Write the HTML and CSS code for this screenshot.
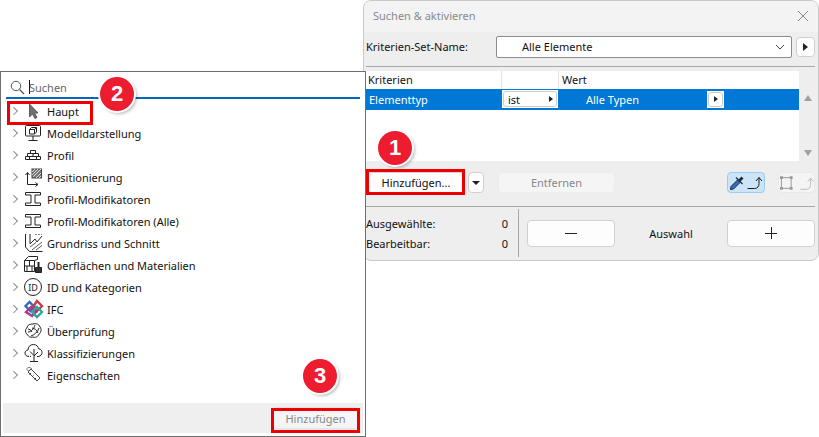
FILE: index.html
```html
<!DOCTYPE html>
<html lang="de">
<head>
<meta charset="utf-8">
<title>Suchen &amp; aktivieren</title>
<link rel="stylesheet" href="styles.css">
</head>
<body>
<section class="dialog">
  <header class="dialog-title">
    <span>Suchen &amp; aktivieren</span>
    <svg class="close" width="12" height="12" viewBox="0 0 12 12"><path d="M1 1l10 10M11 1L1 11" stroke="#8a8a8a" fill="none"/></svg>
  </header>
  <div class="dialog-body">
    <div class="set-row">
      <label class="set-label">Kriterien-Set-Name:</label>
      <div class="select">
        <span>Alle Elemente</span>
        <svg width="10" height="6" viewBox="0 0 10 6"><path d="M1 1l4 4 4-4" stroke="#444" fill="none"/></svg>
      </div>
      <button class="btn arrow-btn"><i class="tri"></i></button>
    </div>
    <hr class="sep">
    <div class="table-wrap">
      <div class="table">
        <div class="thead">
          <span class="c1">Kriterien</span><span class="c2"></span><span class="c3">Wert</span>
        </div>
        <div class="trow">
          <span class="c1 sel-name">Elementtyp</span>
          <span class="c2 cell-pop"><span class="pop">ist<i class="tri small"></i></span></span>
          <span class="c3 sel-val">Alle Typen</span>
          <span class="cell-mini"><span class="mini"><i class="tri small"></i></span></span>
        </div>
      </div>
      <div class="scroll">
        <i class="up"></i><i class="down"></i>
      </div>
    </div>
    <div class="toolbar">
      <button class="btn add">Hinzufügen...</button>
      <button class="btn drop"><i class="down-sm"></i></button>
      <button class="btn remove">Entfernen</button>
      <div class="toggles">
        <button class="btn tog on">
          <svg width="34" height="18" viewBox="0 0 34 18">
            <path d="M1.500 15.500l.5-3 6.500-6.500 2.500 2.500-6.500 6.500z" fill="#2f6fc0" stroke="#1e2a3a"/>
            <path d="M7 3.500l6.500 6.500" stroke="#1e2a3a" stroke-width="1.300" fill="none"/>
            <path d="M9.500 5.500l3-3 2 2-3 3z" fill="#1e2a3a"/>
            <path d="M18.500 14.500h7c3 0 4.500-2 4.500-5V3.500M27 7l3-3.500 3 3.500" stroke="#1a1a1a" fill="none"/>
          </svg>
        </button>
        <button class="btn tog off">
          <svg width="36" height="18" viewBox="0 0 36 18">
            <path d="M2.500 3.500h10v11h-10z" fill="none" stroke="#999"/>
            <path d="M1 2h3v3H1zM11 2h3v3h-3zM1 13h3v3H1zM11 13h3v3h-3z" fill="#999"/>
            <path d="M22 15.500h6c3 0 4.500-2 4.500-5V4M29.500 7.500l3-3.500 3 3.500" stroke="#bbb" fill="none"/>
          </svg>
        </button>
      </div>
    </div>
    <hr class="sep sep-b">
    <div class="selection">
      <div class="counts">
        <div class="count"><span>Ausgewählte:</span><span>0</span></div>
        <div class="count"><span>Bearbeitbar:</span><span>0</span></div>
      </div>
      <div class="vsep"></div>
      <button class="btn big"><svg width="12" height="12" viewBox="0 0 12 12"><path d="M0 6.500h12" stroke="#222"/></svg></button>
      <span class="sel-label">Auswahl</span>
      <button class="btn big"><svg width="12" height="12" viewBox="0 0 12 12"><path d="M0 6.500h12M6.500 0v12" stroke="#222"/></svg></button>
    </div>
  </div>
</section>

<section class="picker">
  <div class="search">
    <svg width="15" height="15" viewBox="0 0 15 15"><circle cx="6" cy="6" r="4.700" fill="none" stroke="#555"/><path d="M9.500 9.500l4.500 4.500" stroke="#555" stroke-width="1.300"/></svg>
    <span class="caret"></span><span class="search-text">Suchen</span>
  </div>
  <ul class="list">
    <li class="item"><i class="chev"></i><svg class="ic" viewBox="0 0 20 20"><path d="M5.500 3v13l3-3 2.500 4.500 2-1-2.500-4.500H14z" fill="#707070" stroke="#5a5a5a"/></svg><span>Haupt</span></li>
    <li class="item"><i class="chev"></i><svg class="ic" viewBox="0 0 20 20" fill="none" stroke="#222"><rect x="1.500" y="2.500" width="15" height="10.500" rx="1"/><path d="M5.500 6.500h5v4.500h-5zM5.500 6.500l2-2h5v4.500l-2 2M10.500 6.500l2-2M9 13v4.500M4.500 17.500h9"/></svg><span>Modelldarstellung</span></li>
    <li class="item"><i class="chev"></i><svg class="ic" viewBox="0 0 20 20" fill="none" stroke="#222"><path d="M6.500 5.500h5v3h-5zM3.500 8.500h11v3h-11zM1.500 11.500h15v3h-15zM9 8.500v3M5.500 11.500v3M12.500 11.500v3"/></svg><span>Profil</span></li>
    <li class="item"><i class="chev"></i><svg class="ic" viewBox="0 0 20 20" fill="none" stroke="#222"><rect x="8" y="2" width="9.500" height="9" fill="#777" stroke="#444"/><path d="M8 5l3-3M8 8l6-6M9 10l8-8M12 11l5-5M15 11l2-2" stroke="#ddd"/><path d="M3.500 6v11.500h10M1.500 8l2-2.500 2 2.500M11.500 15.500l2.500 2-2.500 2"/></svg><span>Positionierung</span></li>
    <li class="item"><i class="chev"></i><svg class="ic" viewBox="0 0 20 20" fill="none" stroke="#222"><path d="M1.500 3.500h15v2.500h-5.500v8h5.500v2.500h-15V14h5.500V6H1.500z"/></svg><span>Profil-Modifikatoren</span></li>
    <li class="item"><i class="chev"></i><svg class="ic" viewBox="0 0 20 20" fill="none" stroke="#222"><path d="M1.500 3.500h15v2.500h-5.500v8h5.500v2.500h-15V14h5.500V6H1.500z"/></svg><span>Profil-Modifikatoren (Alle)</span></li>
    <li class="item"><i class="chev"></i><svg class="ic" viewBox="0 0 20 20" fill="none" stroke="#222"><path d="M1.500 1v13l4 4.500h13M6 1v9.500"/><path d="M6 11l5-5 2 3 5-6"/><path d="M8 17l10-8M12 17l6-4.500M6 14l6-4.500" stroke="#555"/><path d="M11 1.500h7" stroke="#888" stroke-dasharray="2 1"/></svg><span>Grundriss und Schnitt</span></li>
    <li class="item"><i class="chev"></i><svg class="ic" viewBox="0 0 20 20" fill="none" stroke="#222"><path d="M.5 5.500l4-4h9v3M.5 5.500h10v11H.5zM.5 11h10M5.500 5.500V11M3 11v5.500M8 11v5.500M10.500 5.500l3-1"/><path d="M14.500 7v5" stroke-width="2"/><path d="M11.500 12.500h6v5h-6z" fill="#333"/></svg><span>Oberflächen und Materialien</span></li>
    <li class="item"><i class="chev"></i><svg class="ic id" viewBox="0 0 20 20"><circle cx="9" cy="10" r="8.500" fill="none" stroke="#222"/><text x="9" y="13.500" text-anchor="middle">ID</text></svg><span>ID und Kategorien</span></li>
    <li class="item"><i class="chev"></i><svg class="ic" viewBox="0 0 20 20" fill="none" stroke-width="2.400"><path d="M1.500 7l4-4 5 5-4 4z" stroke="#2f6db5"/><path d="M13 2l5 5-5 5-4-4z" stroke="#c73a4a"/><path d="M2 13l5-5 5 5-4 4z" stroke="#a8398f"/><path d="M13 8l5 5-5 5-5-5z" stroke="#2aa89a"/></svg><span>IFC</span></li>
    <li class="item"><i class="chev"></i><svg class="ic" viewBox="0 0 20 20" fill="none" stroke="#222"><path d="M3 13c-2-1-2-5 0-6 0-3 3-4 6-4 3-1 6 0 7 3 2 2 1 6-1 7-1 3-4 4-6 3-3 1-5-1-6-3z"/><path d="M4 11c3 0 6-3 7-7M7 15c3-1 7-4 8-8M8 7c2 0 5 2 6 5M4 8c1 0 3 1 4 3"/></svg><span>Überprüfung</span></li>
    <li class="item"><i class="chev"></i><svg class="ic" viewBox="0 0 20 20" fill="none" stroke="#222"><path d="M5 13.500c-3 0-4-2-4-3.500s1-3 3-3c0-3 2-5.500 5.500-5.500S14 4 15 6c2 0 3 2 3 3.500s-1 4-4 4h-1M6 13.500h1"/><path d="M10 6v12.500M6 18.500h8M6 8.500l4 4M14 9l-4 4"/></svg><span>Klassifizierungen</span></li>
    <li class="item"><i class="chev"></i><svg class="ic" viewBox="0 0 20 20" fill="none" stroke="#444"><path d="M4 7l3-3 9 9-3 3zM7 8l-1.500 1.500M9.500 10.500L8 12M12 13l-1.500 1.500"/><path d="M8 4C6 2 3.500 2 3 3.500S4 6 5 6" stroke="#777"/></svg><span>Eigenschaften</span></li>
  </ul>
  <footer class="picker-foot"><button class="btn foot-btn">Hinzufügen</button></footer>
</section>

<div class="redbox r-add"></div>
<div class="redbox r-haupt"></div>
<div class="redbox r-foot"></div>
<div class="badge b1">1</div>
<div class="badge b2">2</div>
<div class="badge b3">3</div>
</body>
</html>
```
FILE: styles.css
```css
* { box-sizing: border-box; }
html, body { margin: 0; padding: 0; }
body {
  width: 819px; height: 437px; overflow: hidden; background: #fff; position: relative;
  font-family: "Noto Sans", "Open Sans", sans-serif; font-size: 11px; color: #111;
}
button { font: inherit; color: inherit; padding: 0; }
i { display: block; }

/* dialog */
.dialog {
  position: absolute; left: 363px; top: 0; width: 456px; height: 261px;
  background: #eee; border: 1px solid #c9c9c9; border-radius: 8px; overflow: hidden;
  display: flex; flex-direction: column;
}
.dialog-title {
  height: 31px; background: #f3f3f3; display: flex; align-items: center;
  justify-content: space-between; padding: 0 9px 2px 9px; color: #8a8a8a;
}
.dialog-body { flex: 1; padding: 4px 3px 0 2px; display: flex; flex-direction: column; }
.set-row { display: flex; align-items: center; height: 22px; }
.set-label { width: 130px; padding-bottom: 1px; }
.select {
  width: 296px; height: 22px; background: #fff; border: 1px solid #8c8c8c; border-radius: 2px;
  display: flex; align-items: center; justify-content: space-between; padding: 0 6px 1px 25px;
}
.btn { background: #fdfdfd; border: 1px solid #d0d0d0; border-radius: 4px; display: flex; align-items: center; justify-content: center; }
.arrow-btn { width: 19px; height: 20px; margin-left: 4px; }
.tri { width: 0; height: 0; border-left: 5px solid #222; border-top: 4px solid transparent; border-bottom: 4px solid transparent; }
.tri.small { border-left-width: 4px; border-top-width: 3.500px; border-bottom-width: 3.500px; }
.sep { border: 0; height: 1px; background: #a8a8a8; margin: 8px 0 4px; width: 449px; }
.table-wrap { display: flex; height: 90px; width: 449px; }
.table { width: 433px; background: #fff; }
.thead { display: flex; height: 18px; align-items: center; }
.thead .c1, .thead .c3 { padding-bottom: 2px; }
.c1 { width: 135px; padding-left: 2px; }
.c2 { width: 58px; height: 100%; border-left: 1px solid #e2e2e2; border-right: 1px solid #e2e2e2; }
.c3 { padding-left: 3px; }
.trow { display: flex; height: 21px; background: #0078d7; color: #fff; align-items: center; }
.sel-name { padding-left: 3px; }
.cell-pop { border: 0; background: #fff; height: 18px; padding: 1px; margin-top: -1px; width: 56px; margin-left: 1px; margin-right: 1px; }
.pop { display: flex; height: 16px; align-items: center; justify-content: space-between; border: 1px solid #ccc; border-radius: 3px; color: #111; padding: 0 3px 0 4px; line-height: 1; }
.sel-val { padding-left: 27px; width: 148px; }
.cell-mini { background: #fff; width: 17px; height: 17px; padding: 1px; margin-top: -1px; }
.mini { display: flex; height: 15px; align-items: center; justify-content: center; border: 1px solid #ccc; border-radius: 3px; }
.scroll { width: 16px; display: flex; flex-direction: column; justify-content: space-between; align-items: center; padding: 24px 0 5px 2px; }
.up { border-bottom: 6px solid #a0a0a0; border-left: 4.500px solid transparent; border-right: 4.500px solid transparent; }
.down { border-top: 6px solid #a0a0a0; border-left: 4.500px solid transparent; border-right: 4.500px solid transparent; }
.toolbar { display: flex; align-items: center; height: 21px; margin-top: 11px; padding-left: 1px; width: 449px; }
.add { width: 98px; height: 21px; }
.drop { width: 16px; height: 21px; margin-left: 3px; }
.down-sm { border-top: 4px solid #222; border-left: 4px solid transparent; border-right: 4px solid transparent; }
.remove { width: 117px; height: 21px; margin-left: 14px; color: #888; background: #f5f5f5; border-color: #ececec; }
.toggles { display: flex; margin-left: auto; gap: 13px; }
.tog { width: 38px; height: 21px; }
.tog.on { background: #cce4f7; border-color: #99ccf5; }
.tog.off { background: #f4f4f4; border-color: #e8e8e8; width: 37px; }
.sep-b { margin: 13px 0 2px; }
.selection { display: flex; align-items: center; height: 48px; width: 449px; }
.counts { width: 142px; padding-top: 1px; display: flex; flex-direction: column; gap: 5px; }
.count { display: flex; justify-content: space-between; height: 15px; line-height: 15px; }
.vsep { width: 1px; height: 48px; background: #a8a8a8; margin: 0 8px 0 10px; }
.big { width: 88px; height: 27px; }
.sel-label { width: 112px; text-align: center; }

/* picker */
.picker {
  position: absolute; left: 0; top: 71px; width: 366px; height: 366px;
  background: #fff; border: 1px solid #6e6e6e; display: flex; flex-direction: column; padding: 0 2px 3px;
}
.search {
  height: 22px; margin: 5px 3px 0 3px; border-bottom: 2px solid #0067c0; display: flex; align-items: center; padding-left: 4px;
  color: #666;
}
.caret { width: 1px; height: 14px; background: #111; margin-left: 4px; }
.search-text { margin-left: -1px; }
.list { list-style: none; margin: 1px 0 0; padding: 0; flex: 1; }
.item { display: flex; align-items: center; height: 22px; }
.chev { width: 5.500px; height: 5.500px; border-top: 1.500px solid #8a8a8a; border-right: 1.500px solid #8a8a8a; transform: rotate(45deg); margin-left: 8px; flex: none; }
.ic { width: 20px; height: 20px; margin-left: 7.500px; margin-right: 3px; flex: none; }
.id text { font-size: 9px; fill: #222; font-family: "Noto Sans", sans-serif; }
.picker-foot { height: 30px; background: #efefef; display: flex; justify-content: flex-end; align-items: center; padding-right: 4px; }
.foot-btn { width: 87px; height: 22px; color: #888; background: #f5f5f5; border-color: #e2e2e2; }

/* annotations */
.redbox { position: absolute; border: 3px solid #ee0000; }
.r-add { left: 366px; top: 169px; width: 99px; height: 26px; }
.r-haupt { left: 7px; top: 101px; width: 86px; height: 24px; }
.r-foot { left: 271px; top: 408px; width: 89px; height: 25px; }
.badge {
  position: absolute; width: 34px; height: 34px; border-radius: 50%; background: #ed1c2e; color: #fff;
  font-family: "Liberation Sans", sans-serif; font-weight: 700; font-size: 22px; line-height: 34px; text-align: center;
  box-shadow: 0 0 0 2px #fff, 2px 2px 3px 1px rgba(0,0,0,.25);
}
.b1 { left: 378px; top: 131px; }
.b2 { left: 100px; top: 77px; }
.b3 { left: 303px; top: 359px; }
```
